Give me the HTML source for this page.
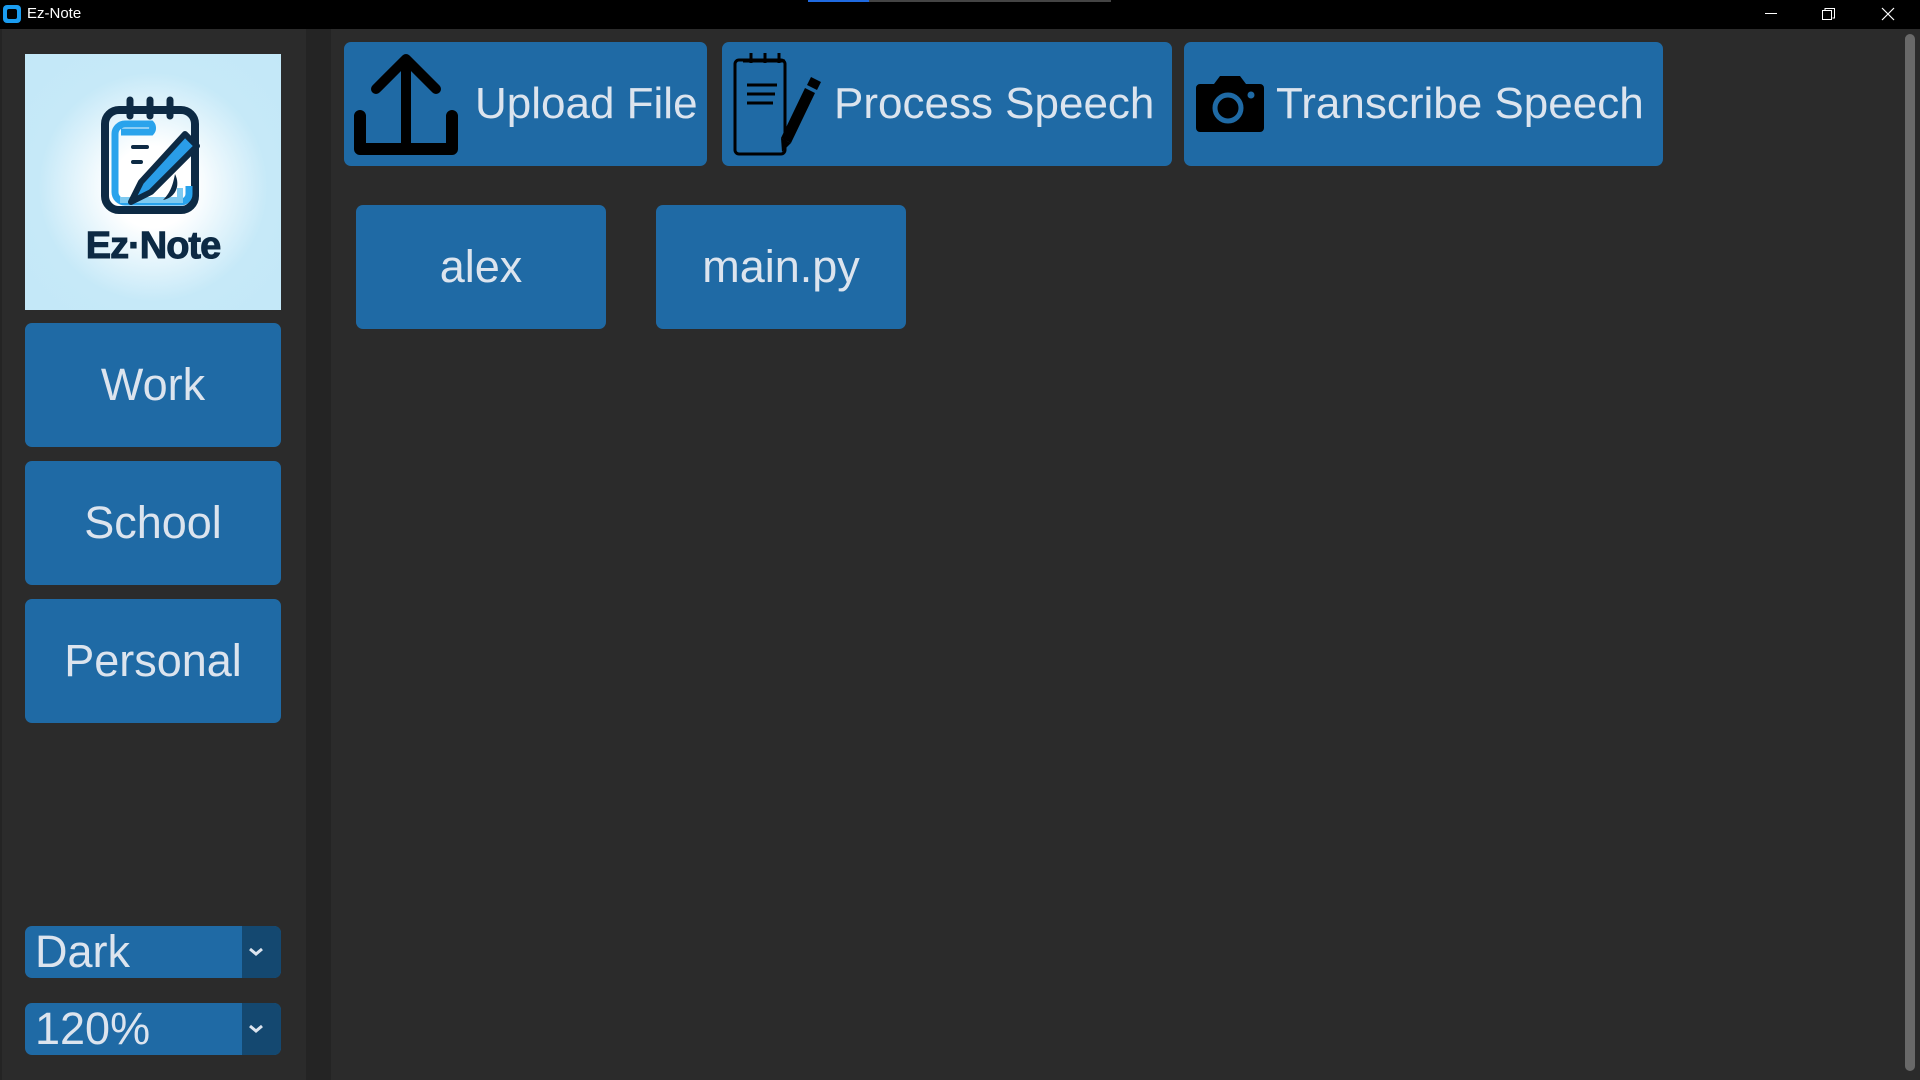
<!DOCTYPE html>
<html><head><meta charset="utf-8"><style>
*{margin:0;padding:0;box-sizing:border-box}
body{width:1920px;height:1080px;background:#2b2b2b;position:relative;overflow:hidden;font-family:"Liberation Sans",sans-serif;color:#dce4ee}
.abs{position:absolute}
.btn{position:absolute;background:#1f6aa5;border-radius:7px;display:flex;align-items:center;justify-content:center;font-size:45px;color:#dce4ee;white-space:nowrap}
.top{font-size:44px}
.dd{position:absolute;left:25px;width:256px;height:52px;background:#1f6aa5;border-radius:7px;overflow:hidden}
.dd span{position:absolute;left:10px;top:0;line-height:52px;font-size:45px}
.dd i{position:absolute;right:0;top:0;width:39px;height:52px;background:#144870}
</style></head><body>
<div class="abs" style="left:0;top:0;width:1920px;height:29px;background:#000"></div>
<div class="abs" style="left:808px;top:0;width:61px;height:2px;background:#1f6ae0"></div>
<div class="abs" style="left:869px;top:0;width:242px;height:2px;background:#444"></div>
<div class="abs" style="left:3px;top:5px;width:18px;height:18px;border-radius:4px;background:#1a9cf0"></div>
<div class="abs" style="left:7px;top:9px;width:10px;height:10px;border-radius:2px;background:#000"></div>
<div class="abs" style="left:27px;top:5px;font-size:15px;color:#fff">Ez-Note</div>
<div class="abs" style="left:1765px;top:13px;width:12px;height:1px;background:#fff"></div>
<svg class="abs" style="left:1822px;top:7px" width="14" height="14"><rect x="0.5" y="3.5" width="9" height="9" fill="none" stroke="#fff"/><path d="M3 3.5V1.5h9.5v9.5h-2" fill="none" stroke="#fff"/></svg>
<svg class="abs" style="left:1881px;top:7px" width="14" height="14"><path d="M1 1L13 13M13 1L1 13" stroke="#fff" stroke-width="1.2"/></svg>

<div class="abs" style="left:306px;top:29px;width:25px;height:1051px;background:#242424"></div>
<div class="abs" style="left:0;top:29px;width:2px;height:1051px;background:#242424"></div>

<div class="abs" style="left:25px;top:54px;width:256px;height:256px;background:radial-gradient(circle at 50% 52%,#fff 0,#fff 22%,#c6e9f8 62%,#c3e8f8 100%)">
<svg width="256" height="256" viewBox="0 0 256 256">
<rect x="80" y="56" width="90" height="100" rx="14" fill="none" stroke="#0d2a44" stroke-width="8"/>
<path d="M96 78h30a6 6 0 0 0 0-8H100a10 10 0 0 0-10 10v58a10 10 0 0 0 10 10h56a8 8 0 0 0 8-8v-8" fill="none" stroke="#29a3ec" stroke-width="7"/>
<path d="M95 146h60v-12" stroke="#7fcaf0" stroke-width="6" fill="none"/>
<g stroke="#0d2a44" stroke-width="7" stroke-linecap="round"><path d="M105 46v16M125 46v16M145 46v16"/></g>
<path d="M108 93h14M108 108h8" stroke="#0d2a44" stroke-width="4" stroke-linecap="round"/>
<path d="M160 80l-44 48-10 20 20-10 46-46z" fill="#2a9de8" stroke="#0d2a44" stroke-width="6" stroke-linejoin="round"/>
<path d="M150 120c6 12 0 24-12 26 8-8 10-16 12-26z" fill="#0d2a44"/>
<text x="128" y="204" text-anchor="middle" font-family="Liberation Sans,sans-serif" font-weight="bold" font-size="38" fill="#0d2a44" stroke="#0d2a44" stroke-width="1" letter-spacing="-1">Ez·Note</text>
</svg></div>

<div class="btn" style="left:25px;top:323px;width:256px;height:124px">Work</div>
<div class="btn" style="left:25px;top:461px;width:256px;height:124px">School</div>
<div class="btn" style="left:25px;top:599px;width:256px;height:124px">Personal</div>

<div class="dd" style="top:926px"><span>Dark</span><i></i><svg class="abs" style="left:223px;top:20px" width="16" height="12"><path d="M2 3l6 5 6-5" stroke="#dce4ee" stroke-width="3" fill="none"/></svg></div>
<div class="dd" style="top:1003px"><span>120%</span><i></i><svg class="abs" style="left:223px;top:20px" width="16" height="12"><path d="M2 3l6 5 6-5" stroke="#dce4ee" stroke-width="3" fill="none"/></svg></div>

<div class="btn top" style="left:344px;top:42px;width:363px;height:124px;justify-content:flex-start">
<svg style="margin-left:9px" width="106" height="106" viewBox="0 0 106 106"><path d="M53 92V10M23 38L53 8l30 30" fill="none" stroke="#000" stroke-width="10" stroke-linecap="round" stroke-linejoin="round"/><path d="M7 65v33h92V65" fill="none" stroke="#000" stroke-width="12" stroke-linejoin="round" stroke-linecap="round"/></svg>
<span style="margin-left:16px">Upload File</span></div>

<div class="btn top" style="left:722px;top:42px;width:450px;height:124px;justify-content:flex-start">
<svg style="margin-left:11px" width="90" height="106" viewBox="0 0 90 106"><rect x="2" y="9" width="50" height="94" rx="4" fill="none" stroke="#000" stroke-width="3"/><g stroke="#000" stroke-width="3"><path d="M18 2v10M32 2v10M46 2v10M10 10h42"/></g><path d="M14 34h30M14 43h28M14 52h26" stroke="#000" stroke-width="3"/><path d="M78 26l10 5-4 8-10-5z" fill="#000"/><path d="M72 37l10 5-24 50-10-5z" fill="#000"/><path d="M48 87l10 5-9 9z" fill="#000"/></svg>
<span style="margin-left:11px">Process Speech</span></div>

<div class="btn top" style="left:1184px;top:42px;width:479px;height:124px;justify-content:flex-start">
<svg style="margin-left:12px" width="68" height="56" viewBox="0 0 68 56"><path d="M4 8h14l6-8h20l6 8h14a4 4 0 0 1 4 4v40a4 4 0 0 1-4 4H4a4 4 0 0 1-4-4V12a4 4 0 0 1 4-4z" fill="#000"/><circle cx="32" cy="32" r="13" fill="none" stroke="#1f6aa5" stroke-width="5"/><circle cx="55" cy="19" r="3.5" fill="#1f6aa5"/></svg>
<span style="margin-left:12px">Transcribe Speech</span></div>

<div class="btn" style="left:356px;top:205px;width:250px;height:124px">alex</div>
<div class="btn" style="left:656px;top:205px;width:250px;height:124px">main.py</div>

<div class="abs" style="left:1905px;top:34px;width:10px;height:1037px;border-radius:5px;background:#696969"></div>
</body></html>
